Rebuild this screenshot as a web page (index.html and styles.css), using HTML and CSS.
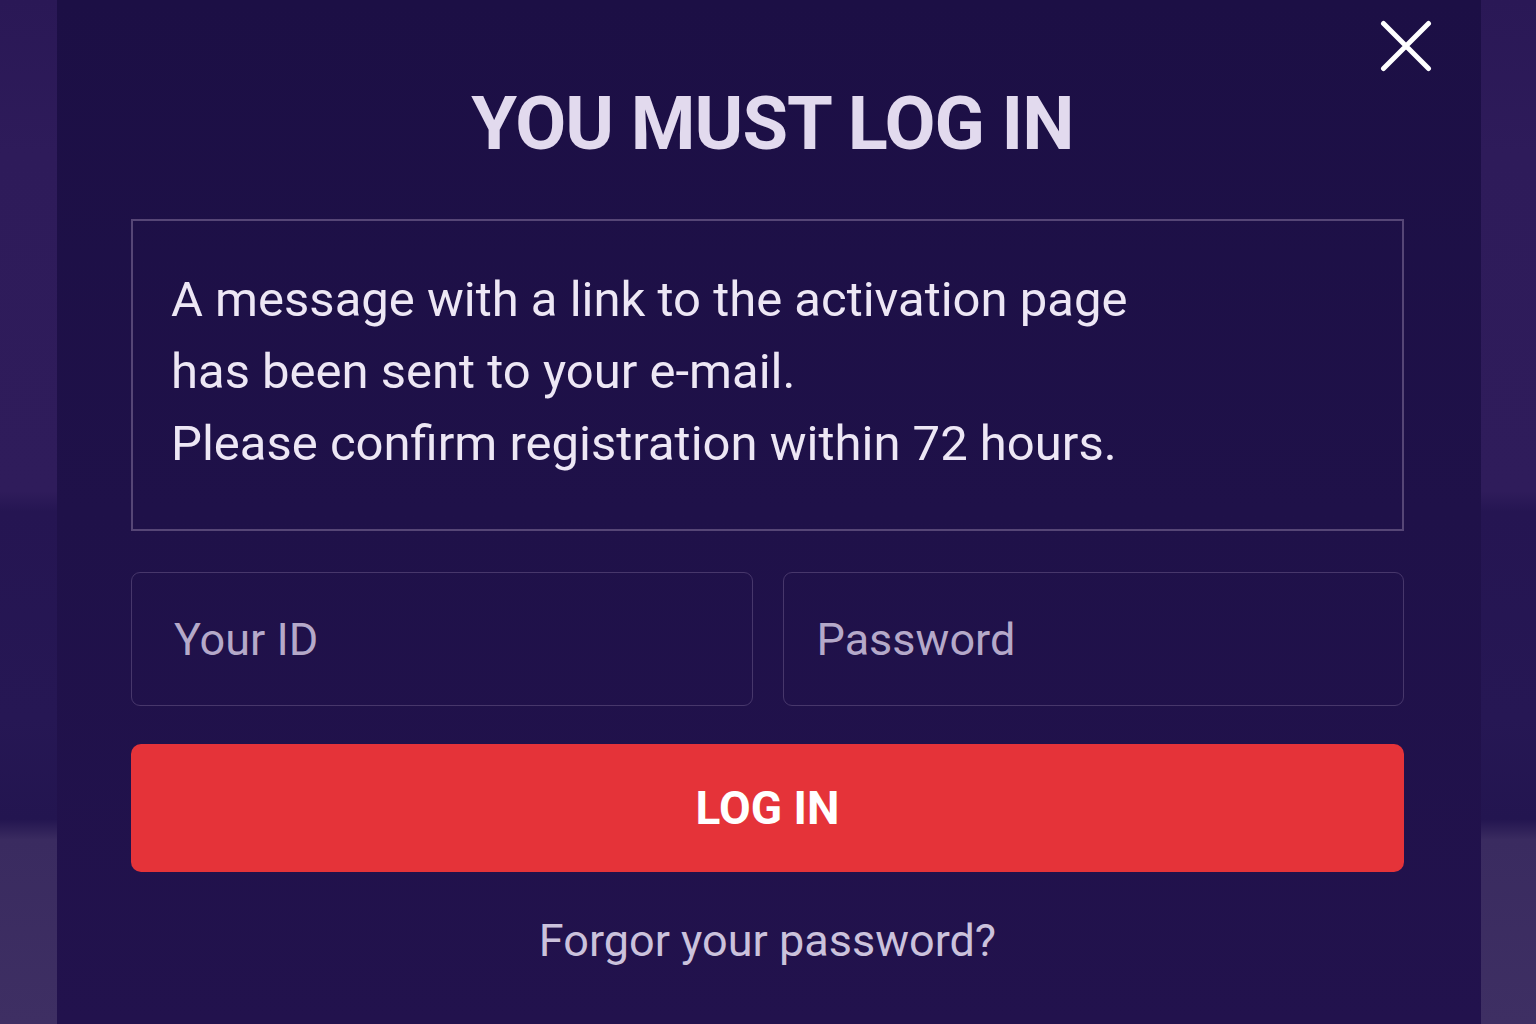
FILE: index.html
```html
<!DOCTYPE html>
<html lang="en">
<head>
<meta charset="utf-8">
<title>You must log in</title>
<link rel="stylesheet" href="styles.css">
</head>
<body>
<div class="page">
  <div class="side side-left"></div>
  <main class="modal">
    <button class="close" aria-label="Close">
      <svg width="52" height="52" viewBox="0 0 52 52"><path d="M3.5 3.5 L48.5 48.5 M48.5 3.5 L3.5 48.5" stroke="#ffffff" stroke-width="5" stroke-linecap="round" fill="none"/></svg>
    </button>
    <h1 class="title">YOU MUST LOG IN</h1>
    <div class="message">
      <p>A message with a link to the activation page<br>has been sent to your e-mail.<br>Please confirm registration within 72 hours.</p>
    </div>
    <form class="form">
      <div class="fields">
        <input class="field field-id" type="text" placeholder="Your ID">
        <input class="field field-pass" type="password" placeholder="Password">
      </div>
      <button class="login" type="button">LOG IN</button>
    </form>
    <a class="forgot" href="#">Forgor your password?</a>
  </main>
  <div class="side side-right"></div>
</div>
</body>
</html>
```

FILE: styles.css
```css
* { box-sizing: border-box; }
html, body { margin: 0; padding: 0; }
body {
  width: 1536px;
  height: 1024px;
  overflow: hidden;
  font-family: Roboto, "Noto Sans", sans-serif;
  background: #1d1046;
}
.page {
  display: flex;
  width: 1536px;
  height: 1024px;
}
.side {
  flex: 0 0 auto;
  background: linear-gradient(180deg, #2a1856 0%, #2e1b5a 15%, #2f1c5b 48%, #251552 50%, #261754 70%, #231550 80%, #3a2b60 82%, #3e2f63 100%);
}
.side-left { width: 57px; }
.side-right { width: 55px; }
.modal {
  position: relative;
  flex: 1 1 0;
  min-width: 0;
  background: linear-gradient(180deg, #1c0f45 0%, #1f1149 50%, #22124d 100%);
  padding: 79px 77px 0 74px;
  display: flex;
  flex-direction: column;
}
.close {
  position: absolute;
  top: 20px;
  right: 49px;
  width: 52px;
  height: 52px;
  padding: 0;
  border: 0;
  background: none;
}
.close svg { display: block; }
.title {
  margin: 0;
  padding-left: 10px;
  text-align: center;
  font-size: 74px;
  font-weight: 700;
  line-height: 90px;
  color: #e2daee;
  letter-spacing: -0.9px;
}
.message {
  margin-top: 50px;
  border: 2px solid #564676;
  padding: 43px 38px 49px;
}
.message p {
  margin: 0;
  font-size: 49px;
  line-height: 72px;
  color: #ede7f5;
}
.form {
  margin-top: 41px;
  display: flex;
  flex-direction: column;
  gap: 38px;
}
.fields {
  display: grid;
  grid-template-columns: repeat(2, minmax(0, 1fr));
  gap: 30px;
}
.field {
  width: 100%;
  min-width: 0;
  height: 134px;
  border: 1.5px solid #47376b;
  border-radius: 9px;
  background: transparent;
  font-family: Roboto, "Noto Sans", sans-serif;
  font-size: 45px;
  color: #b9adcc;
  outline: none;
}
.field-id { padding: 0 40px 0 42px; }
.field-pass { padding: 0 40px 0 33px; }
.field::placeholder { color: #b5a9c9; opacity: 1; }
.login {
  height: 128px;
  border: 0;
  border-radius: 10px;
  background: #e53339;
  color: #ffffff;
  font-family: Roboto, "Noto Sans", sans-serif;
  font-size: 46px;
  font-weight: 700;
  letter-spacing: 0;
}
.forgot {
  align-self: center;
  margin-top: 42px;
  font-size: 45px;
  line-height: 54px;
  color: #cbc2dc;
  text-decoration: none;
}
```
